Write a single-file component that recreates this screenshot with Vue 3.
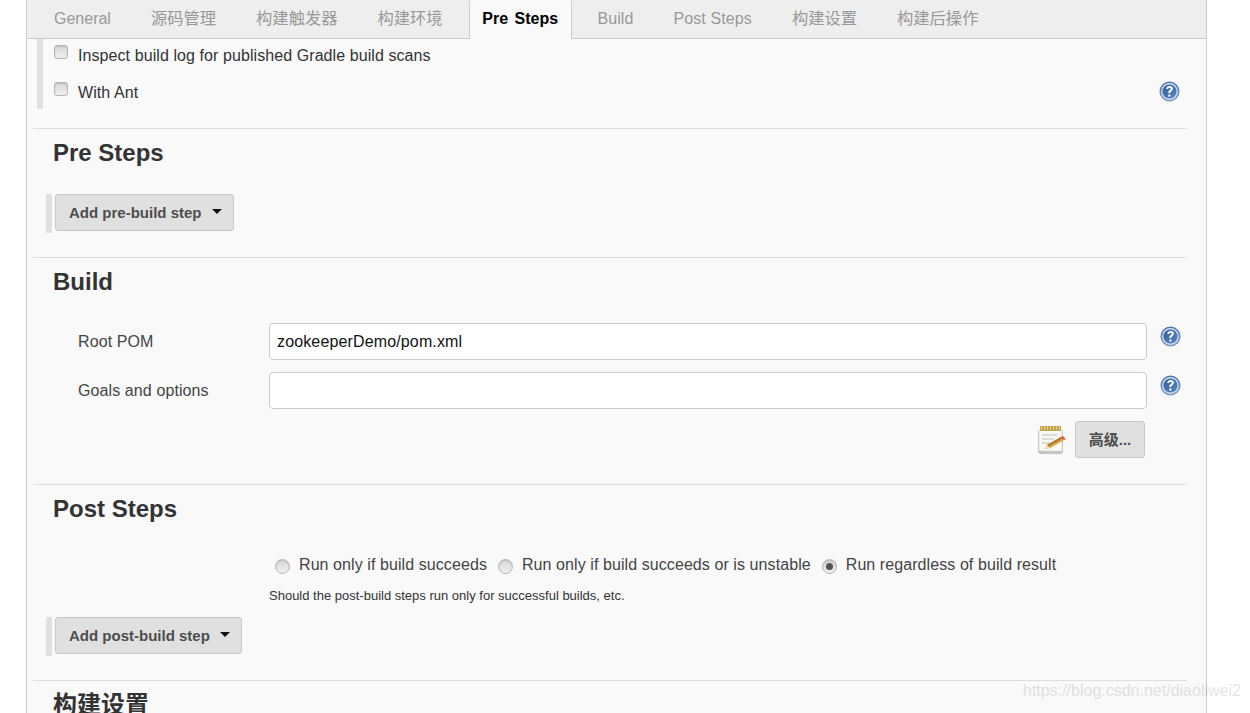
<script setup>
const tabs = [
  { t: 'General' }, { t: '源码管理', cjk: true }, { t: '构建触发器', cjk: true }, { t: '构建环境', cjk: true },
  { t: 'Pre Steps', active: true }, { t: 'Build' }, { t: 'Post Steps' }, { t: '构建设置', cjk: true }, { t: '构建后操作', cjk: true },
]
const radios = [
  { label: 'Run only if build succeeds', on: false },
  { label: 'Run only if build succeeds or is unstable', on: false },
  { label: 'Run regardless of build result', on: true },
]
</script>

<template>
  <div class="page">
    <main class="panel">
      <nav class="tabs">
        <span v-for="t in tabs" :key="t.t" class="tab" :class="{ active: t.active, cjk: t.cjk }">{{ t.t }}</span>
      </nav>

      <div class="top-block">
        <label class="check first"><input type="checkbox" /><span>Inspect build log for published Gradle build scans</span></label>
        <div class="ant-row">
          <label class="check"><input type="checkbox" /><span>With Ant</span></label>
          <svg class="help" viewBox="0 0 22 22"><use href="#help-icon" /></svg>
        </div>
      </div>

      <section class="sec pre">
        <h2>Pre Steps</h2>
        <div class="bar"><button class="btn">Add pre-build step<i class="caret"></i></button></div>
      </section>

      <section class="sec build">
        <h2>Build</h2>
        <div class="field root">
          <label>Root POM</label>
          <input class="text" value="zookeeperDemo/pom.xml" />
          <svg class="help" viewBox="0 0 22 22"><use href="#help-icon" /></svg>
        </div>
        <div class="field goals">
          <label>Goals and options</label>
          <input class="text" value="" />
          <svg class="help" viewBox="0 0 22 22"><use href="#help-icon" /></svg>
        </div>
        <div class="adv">
          <svg class="note" viewBox="0 0 30 30">
            <path d="M1 6h25v21l-2 2H3l-2-2z" fill="#c4c4c0" />
            <rect x="2" y="5" width="23" height="21" fill="#f8f8f4" stroke="#d6d6ce" stroke-width=".6" />
            <rect x="3" y="1" width="21" height="5" fill="#bfa64d" />
            <path d="M4.500 1.500v3M7.500 1.500v3M10.500 1.500v3M13.500 1.500v3M16.500 1.500v3M19.500 1.500v3M22.500 1.500v3" stroke="#e6d798" stroke-width="1" />
            <path d="M5 10h15M5 14h12M5 18h8" stroke="#d4d4ce" stroke-width="1.300" />
            <path d="M8 24l2-4 14-8 3 3-14 8z" fill="#d9a23c" />
            <path d="M10 20l14-8 1 1.500-14 8z" fill="#a8742a" />
            <path d="M24 12l1.600-1 3 3-1.600 1z" fill="#d8453a" />
            <path d="M8 24l2-4 3 3z" fill="#f0dcb8" />
          </svg>
          <button class="btn small">高级...</button>
        </div>
      </section>

      <section class="sec post">
        <h2>Post Steps</h2>
        <div class="radios">
          <label v-for="r in radios" :key="r.label" class="radio">
            <input type="radio" name="post" :checked="r.on" /><span>{{ r.label }}</span>
          </label>
        </div>
        <p class="hint">Should the post-build steps run only for successful builds, etc.</p>
        <div class="bar"><button class="btn">Add post-build step<i class="caret"></i></button></div>
      </section>

      <section class="sec last">
        <h2>构建设置</h2>
      </section>
    </main>

    <div class="mark">https://blog.csdn.net/diaoliwei2</div>

    <svg class="defs" width="0" height="0">
      <defs>
        <linearGradient id="help-grad" x1="0" y1="0" x2="1" y2="1">
          <stop offset="0" stop-color="#2f5f9f" />
          <stop offset="1" stop-color="#5c86bd" />
        </linearGradient>
        <linearGradient id="help-ring" x1="0" y1="0" x2="0" y2="1">
          <stop offset="0" stop-color="#4a75ad" />
          <stop offset="1" stop-color="#7b9cc6" />
        </linearGradient>
        <g id="help-icon">
          <circle cx="11" cy="11" r="10.500" fill="url(#help-ring)" />
          <circle cx="11" cy="11" r="8.800" fill="#d3deec" />
          <circle cx="11" cy="11" r="7.400" fill="url(#help-grad)" />
          <path d="M7.600 8.500c0-2 1.500-3.200 3.500-3.200 2 0 3.400 1.100 3.400 2.900 0 1.400-.8 2-1.700 2.700-.8.500-1 .9-1 1.700H9.700c0-1.400.4-2.100 1.300-2.800.7-.5 1.200-.9 1.200-1.500 0-.7-.5-1.100-1.200-1.100-.8 0-1.300.5-1.300 1.300z" fill="#fff" />
          <rect x="9.800" y="14" width="2.100" height="2.300" fill="#fff" />
        </g>
      </defs>
    </svg>
  </div>
</template>

<style>
html, body { margin: 0; background: #fff; overflow: hidden; }
</style>

<style scoped>
.page {
  position: relative;
  width: 1250px;
  height: 713px;
  overflow: hidden;
  font-family: "Liberation Sans", "Noto Sans CJK SC", sans-serif;
  color: #333;
}
.defs { position: absolute; }
.panel {
  box-sizing: border-box;
  width: 1181px;
  height: 713px;
  margin-left: 26px;
  background: #f9f9f9;
  border-left: 1px solid #ccc;
  border-right: 1px solid #ccc;
  overflow: hidden;
}
.tabs {
  display: flex;
  box-sizing: border-box;
  height: 39px;
  padding-left: 7px;
  background: #eee;
  border-bottom: 1px solid #ccc;
}
.tab {
  padding: 0 20px;
  height: 38px;
  line-height: 37px;
  font-size: 16px;
  letter-spacing: .1px;
  color: #999;
  white-space: nowrap;
}
.tab:first-child { letter-spacing: 0; }
.tab.cjk { font-size: 16.300px; letter-spacing: 0; }
.tab.active {
  box-sizing: border-box;
  height: 39px;
  padding: 0 13px 0 12px;
  margin: 0 5.300px 0 6.700px;
  background: #f9f9f9;
  border: 1px solid #ccc;
  border-top: 0;
  border-bottom: 0;
  border-radius: 3px 3px 0 0;
  color: #000;
  font-weight: 700;
  letter-spacing: 0;
  word-spacing: 2px;
}
.top-block {
  box-sizing: border-box;
  height: 70px;
  margin-left: 10px;
  padding: 5px 26px 0 11px;
  border-left: 6px solid #e0e0e0;
  font-size: 16px;
  letter-spacing: .08px;
}
.check { display: flex; align-items: center; height: 24px; }
.check span { margin-left: 10px; line-height: 24px; }
.check input, .radio input {
  appearance: none;
  margin: 0;
  flex: none;
  background: linear-gradient(#d6d6d6, #efefef);
  border: 1px solid #b5b5b5;
  box-shadow: inset 0 1px 1px rgba(0,0,0,.12);
}
.check input {
  width: 14px;
  height: 14px;
  border-radius: 3px;
  position: relative;
  top: -4px;
}
.ant-row {
  display: flex;
  align-items: center;
  justify-content: space-between;
  margin-top: 13px;
}
.ant-row .help { margin-top: -4px; }
.help { width: 21px; height: 21px; flex: none; }
.sec {
  margin: 0 19px 0 6px;
  border-top: 1px solid #ddd;
}
.sec h2 {
  margin: 0;
  padding-left: 20px;
  font-size: 24px;
  line-height: 28px;
  font-weight: 700;
  color: #333;
}
.pre { margin-top: 19px; height: 129px; padding-top: 10px; box-sizing: border-box; }
.bar {
  display: inline-block;
  margin: 27px 0 0 13px;
  padding-left: 3px;
  border-left: 6px solid #e0e0e0;
  height: 39px;
}
.btn {
  display: inline-flex;
  align-items: center;
  box-sizing: border-box;
  height: 37px;
  padding: 0 12px 0 13px;
  background: #e0e0e0;
  border: 1px solid #c8c8c8;
  border-radius: 3px;
  font-family: inherit;
  font-size: 15px;
  font-weight: 700;
  color: #4d4d4d;
  vertical-align: top;
}
.caret {
  width: 0;
  height: 0;
  margin: -3px -1.500px 0 10.500px;
  border-left: 5px solid transparent;
  border-right: 5px solid transparent;
  border-top: 5.500px solid #111;
}
.build { height: 227px; padding-top: 10px; box-sizing: border-box; }
.field {
  display: flex;
  align-items: center;
  height: 37px;
}
.field.root { margin-top: 27px; }
.field.goals { margin-top: 12px; }
.field label {
  width: 236px;
  padding-left: 45px;
  box-sizing: border-box;
  font-size: 16px;
  letter-spacing: .1px;
  color: #444;
}
.text {
  box-sizing: border-box;
  width: 878px;
  height: 37px;
  padding: 0 7px;
  background: #fff;
  border: 1px solid #ccc;
  border-radius: 4px;
  font-family: inherit;
  font-size: 16px;
  letter-spacing: .14px;
  color: #111;
  outline: none;
}
.field .help { margin: -11px 0 0 12.500px; }
.adv {
  display: flex;
  justify-content: flex-end;
  align-items: center;
  margin-top: 12px;
  padding-right: 42px;
}
.note { width: 30px; height: 30px; margin-right: 8px; }
.btn.small { justify-content: center; padding: 0 0 2px; width: 70px; }
.post { height: 196px; padding-top: 10px; box-sizing: border-box; }
.radios {
  display: flex;
  margin: 30px 0 0 242px;
  height: 24px;
  font-size: 16px;
  letter-spacing: .08px;
  color: #444;
}
.radio { display: flex; align-items: center; margin-right: 11px; }
.radio span { margin-left: 9px; }
.radio input {
  width: 15px;
  height: 15px;
  border-radius: 50%;
  position: relative;
  top: 1px;
}
.radio input:checked::after {
  content: "";
  position: absolute;
  left: 3px;
  top: 3px;
  width: 7px;
  height: 7px;
  border-radius: 50%;
  background: #555;
}
.hint {
  margin: 11px 0 0 236px;
  font-size: 13px;
  line-height: 16px;
  color: #333;
}
.post .bar { margin-top: 13px; }
.last { padding-top: 10px; box-sizing: border-box; }
.mark {
  position: absolute;
  left: 1023px;
  top: 682px;
  font-size: 16px;
  color: #000;
  opacity: .1;
  white-space: nowrap;
}
</style>
